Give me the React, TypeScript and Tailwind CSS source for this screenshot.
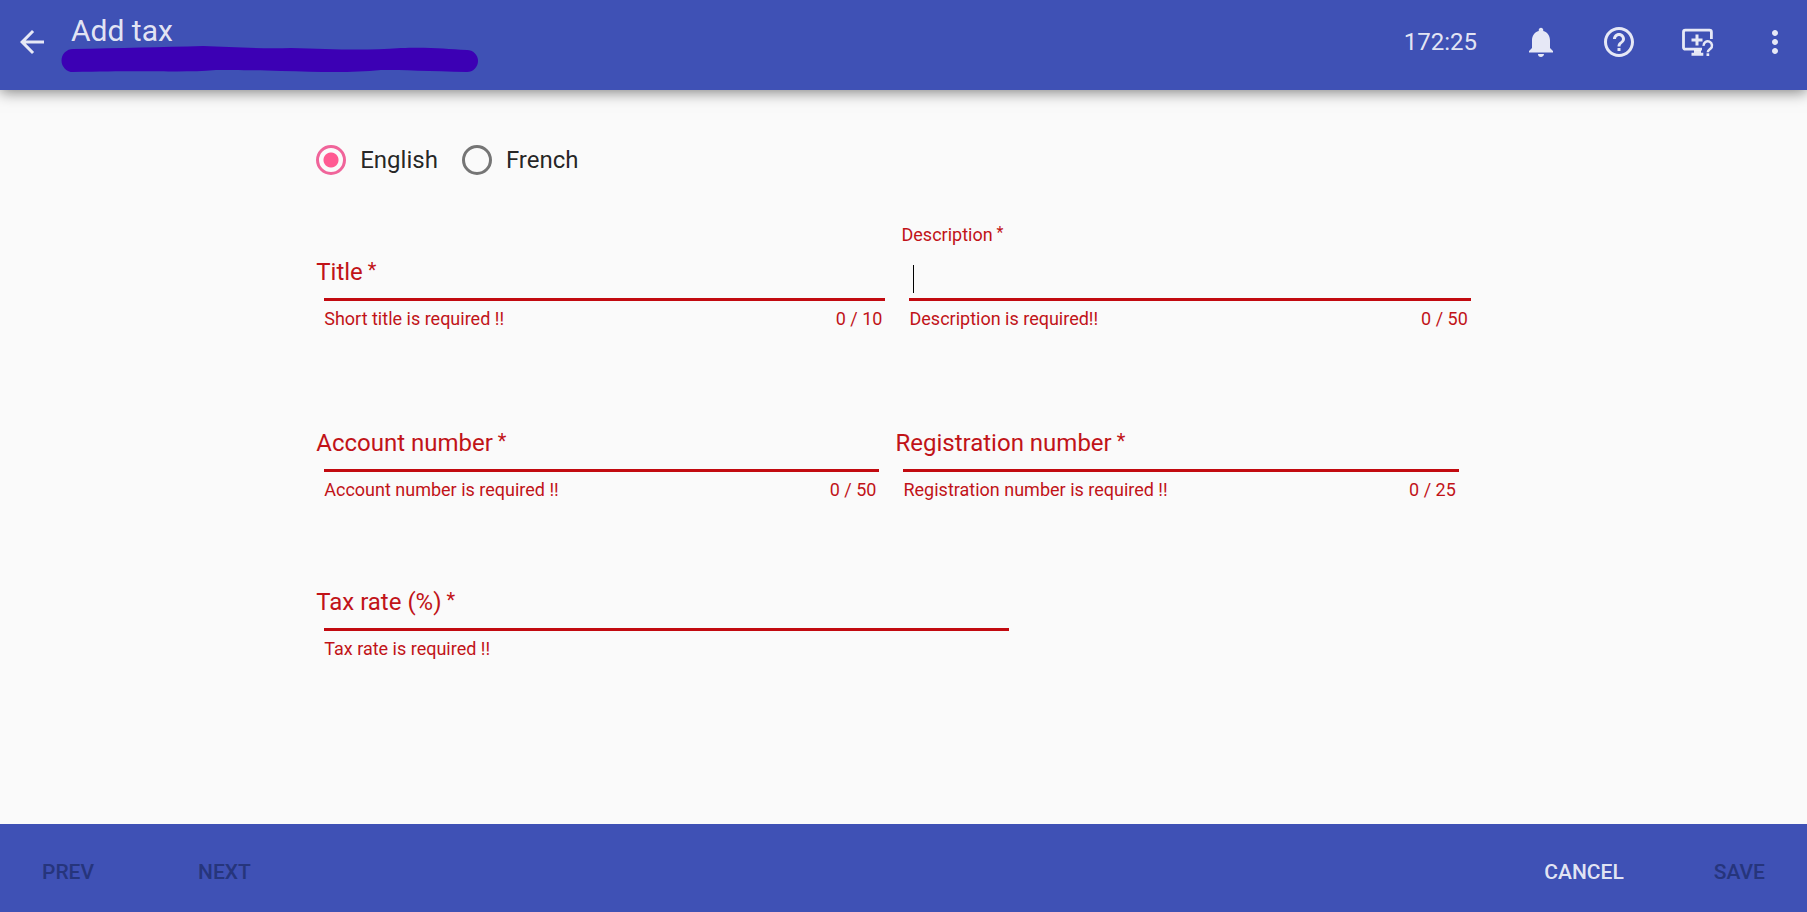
import { useState, type ReactNode } from "react";
import { MdArrowBack, MdHelpOutline, MdMoreVert, MdNotifications } from "react-icons/md";

function RemoteHelpIcon() {
  return (
    <svg viewBox="0 0 36 36" className="size-9" fill="none" stroke="currentColor" aria-hidden="true">
      <path d="M32.4 15V8a1.800 1.800 0 0 0-1.800-1.800H6.300A1.800 1.800 0 0 0 4.500 8v15.400a1.800 1.800 0 0 0 1.800 1.800H23" strokeWidth="2.800" />
      <path d="M18 10.500v11M12.500 16h11" strokeWidth="3" />
      <path d="M15 26h7v2.700h2.300v3H12.500v-3H15z" fill="currentColor" stroke="none" />
      <path d="M24.600 21.800a4.200 4.200 0 1 1 6.800 3c-1.700 1.300-2.600 1.700-2.600 3.400" strokeWidth="2.500" />
      <path d="M27.500 29.300h2.700v2.700h-2.700z" fill="currentColor" stroke="none" />
    </svg>
  );
}

function IconButton({ label, children }: { label: string; children: ReactNode }) {
  return (
    <button type="button" aria-label={label} className="flex size-9 items-center justify-center">
      {children}
    </button>
  );
}

type FieldProps = {
  id: string;
  label: string;
  error: string;
  max?: number;
  active?: boolean;
  onActivate: (id: string) => void;
};

function Field({ id, label, error, max, active = false, onActivate }: FieldProps) {
  const [value, setValue] = useState("");
  const floating = active || value !== "";
  return (
    <div className="relative text-lg leading-6 text-[#c11318]">
      <label
        htmlFor={id}
        className={
          floating
            ? "flex h-9 items-start gap-1 text-lg leading-5"
            : "absolute top-[31px] left-0 flex items-start gap-[5px] text-2xl leading-8"
        }
      >
        {label}
        <span className={floating ? "text-base leading-4" : "text-xl leading-7"}>*</span>
      </label>
      <div className={floating ? "relative pl-2" : "relative pt-9 pl-2"}>
        <input
          id={id}
          type="text"
          required
          maxLength={max}
          value={value}
          onFocus={() => onActivate(id)}
          onChange={(e) => setValue(e.target.value)}
          className="block h-10 w-full border-b-3 border-[#c20a10] bg-transparent px-1 text-2xl text-black/87 caret-transparent outline-none"
        />
        {active && value === "" && <span className="absolute top-1 left-3 h-7 w-px bg-black" />}
      </div>
      <div className="flex justify-between pt-1.5 pr-[3px] pl-2">
        <span>{error}</span>
        {max !== undefined && (
          <span>
            {value.length} / {max}
          </span>
        )}
      </div>
    </div>
  );
}

function LanguageOption({ label, checked, onSelect }: { label: string; checked: boolean; onSelect: () => void }) {
  return (
    <label className="flex items-center gap-3.5">
      <input
        type="radio"
        name="language"
        checked={checked}
        onChange={onSelect}
        className="size-[30px] appearance-none rounded-full border-3 border-[#757575] checked:border-[#f0649a] checked:bg-[radial-gradient(circle,#ff5a92_7px,transparent_8px)]"
      />
      {label}
    </label>
  );
}

export default function App() {
  const [language, setLanguage] = useState("English");
  const [active, setActive] = useState("description");

  return (
    <div className="flex min-h-screen flex-col bg-[#fafafa] font-[Roboto,sans-serif] text-2xl text-black/87">
      <header className="flex h-[90px] items-start justify-between bg-[#3f51b5] px-3.5 text-white/87 shadow-[0_2px_14px_rgba(0,0,0,0.5)]">
        <div className="flex">
          <div className="pt-6">
            <IconButton label="Back">
              <MdArrowBack className="size-9" />
            </IconButton>
          </div>
          <div className="pt-4 pl-[11px]">
            <h1 className="pl-[10px] text-[30px] leading-[30px]">Add tax</h1>
            <svg viewBox="0 0 417 28" className="block h-7 w-[417px]" aria-hidden="true">
              <path
                d="M12 3C60 2 100 1 142 0C170 1 200 3 230 2C270 3 300 5 340 2C370 1 385 3 406 4A11 11 0 0 1 406 26C370 25 340 24 320 24C290 27 260 26 220 25C190 24 170 24 155 24C120 27 100 24 12 26A11.500 11.500 0 0 1 12 3Z"
                fill="#3c00b4"
              />
            </svg>
          </div>
        </div>
        <div className="flex items-center gap-[42px] pt-6">
          <span className="pr-1">172:25</span>
          <IconButton label="Notifications">
            <MdNotifications className="size-9" />
          </IconButton>
          <IconButton label="Help">
            <MdHelpOutline className="size-9" />
          </IconButton>
          <IconButton label="Remote assistance">
            <RemoteHelpIcon />
          </IconButton>
          <IconButton label="More options">
            <MdMoreVert className="size-9" />
          </IconButton>
        </div>
      </header>

      <main className="mx-auto w-[65%] grow">
        <div role="radiogroup" aria-label="Language" className="flex gap-6 pt-[54px]">
          {["English", "French"].map((name) => (
            <LanguageOption key={name} label={name} checked={language === name} onSelect={() => setLanguage(name)} />
          ))}
        </div>
        <form>
          <div className="grid grid-cols-2 gap-4 pt-[49px] pr-5">
            <Field id="title" label="Title" error="Short title is required !!" max={10} active={active === "title"} onActivate={setActive} />
            <Field id="description" label="Description" error="Description is required!!" max={50} active={active === "description"} onActivate={setActive} />
          </div>
          <div className="grid grid-cols-2 gap-4 pt-[65px] pr-8">
            <Field id="account" label="Account number" error="Account number is required !!" max={50} active={active === "account"} onActivate={setActive} />
            <Field id="registration" label="Registration number" error="Registration number is required !!" max={25} active={active === "registration"} onActivate={setActive} />
          </div>
          <div className="w-[59%] pt-[53px]">
            <Field id="rate" label="Tax rate (%)" error="Tax rate is required !!" active={active === "rate"} onActivate={setActive} />
          </div>
        </form>
      </main>

      <footer className="flex h-[88px] items-center justify-between bg-[#3f51b5] px-[42px] pt-2 text-[21px] font-medium text-white/87">
        <div className="flex gap-[104px]">
          <button type="button" disabled className="text-[#26357c]">PREV</button>
          <button type="button" disabled className="text-[#26357c]">NEXT</button>
        </div>
        <div className="flex gap-[90px]">
          <button type="button">CANCEL</button>
          <button type="button" disabled className="text-[#26357c]">SAVE</button>
        </div>
      </footer>
    </div>
  );
}
